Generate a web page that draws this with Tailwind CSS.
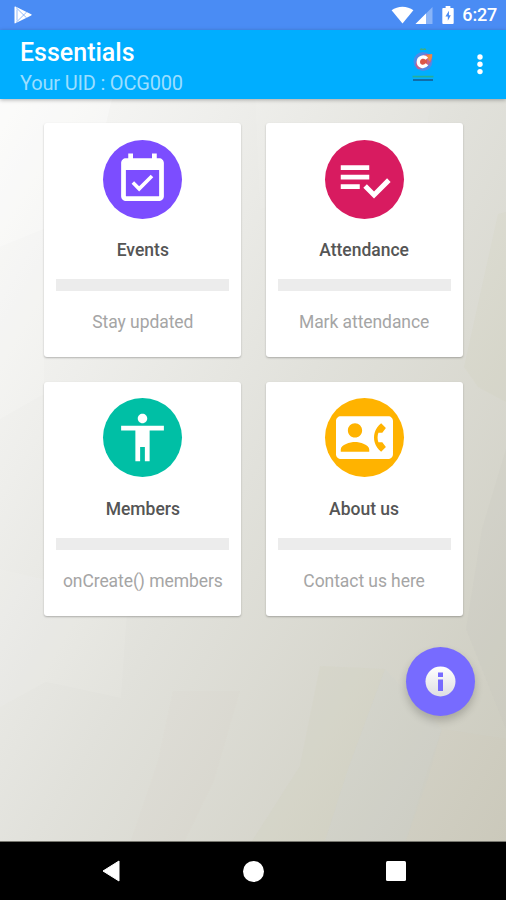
<!DOCTYPE html>
<html lang="en">
<head>
<meta charset="utf-8">
<title>Essentials</title>
<script src="https://cdn.jsdelivr.net/npm/@tailwindcss/browser@4"></script>
</head>
<body class="flex h-[900px] w-[506px] flex-col overflow-hidden bg-black font-['Roboto',sans-serif]">
  <!-- Status bar -->
  <header class="flex h-[30px] shrink-0 items-center justify-between bg-[#4a8cf4] pl-[14px] pr-[9px] text-white">
    <svg class="h-[18px] w-[18px]" viewBox="0 0 18 18"><path d="M.5 1.2Q.5.2 1.4.6L17.2 8.2q1 .6 0 1.2L1.4 17.3q-.9.4-.9-.6z" fill="#fff"/><path d="M2 1.5 12.7 12M2 16.5 12.7 6M3 3.5v11" stroke="#4a8cf4" stroke-width=".6" fill="none"/></svg>
    <div class="flex items-center">
      <svg class="h-[18px] w-[23px]" viewBox="0 0 23 18"><path d="M.6 4.2C6.8-.5 16.2-.5 22.4 4.2L11.5 17.5z" fill="#fff"/></svg>
      <svg class="ml-[1px] h-[17px] w-[18px]" viewBox="0 0 18 17"><path d="M17.5 0v17H.5z" fill="#fff" opacity=".35"/><path d="M11 6.500V17H.5z" fill="#fff"/></svg>
      <svg class="ml-[9px] h-[18px] w-[12px]" viewBox="0 0 12 19"><path d="M3.500 0h5v2H11q1 0 1 1v15q0 1-1 1H1q-1 0-1-1V3q0-1 1-1h2.500z" fill="#fff"/><path d="M7 5 3.300 11h2.500v4.500L9 9.800H7z" fill="#4a8cf4"/></svg>
      <span class="ml-[8px] text-[18px] leading-[32px] font-medium tracking-[-0.2px]">6:27</span>
    </div>
  </header>

  <!-- App bar -->
  <div class="relative z-10 flex h-[69px] shrink-0 items-start justify-between bg-[#00aeff] pl-5 pr-[23px] shadow-[0_1px_4px_rgba(0,0,0,0.3)]">
    <div class="pt-[9px]">
      <h1 class="text-[25px] leading-[28px] font-medium text-white">Essentials</h1>
      <p class="mt-[4px] text-[20px] leading-[24px] tracking-[-0.180px] text-[#9bdeff]">Your UID : OCG000</p>
    </div>
    <div class="flex items-center pt-[16px]">
      <svg class="h-[36px] w-[24px]" viewBox="0 0 24 36">
        <path d="M8.500 4 10 2l2 1L14 2l1.500 2z" fill="#3cae86"/>
        <circle cx="12" cy="15.500" r="9.500" fill="#4f8ae6"/>
        <path d="M4.500 19.500Q5 12 12 9q5-1.500 9.500-.500-.500 8-4.500 11-5 4-10 3.500z" fill="#c4638d"/>
        <path d="m15 9.500 6-1.500q.5 5-2.500 7.500z" fill="#ea8a45"/>
        <circle cx="12" cy="15.500" r="4" fill="#dd5648"/>
        <path d="M15.800 12.800C13 9.300 7.300 11.300 7.300 16c0 4.700 6 6 8.700 2.300" fill="none" stroke="#fff" stroke-width="3.300"/>
        <path d="M1.500 30.600h21" stroke="#26ae9a" stroke-width="1.700"/><path d="M2 34h20" stroke="#14609a" stroke-width="1.700"/>
      </svg>
      <svg class="ml-[42px] h-[22px] w-[6px]" viewBox="0 0 6 22" fill="#fff"><circle cx="3" cy="4" r="2.700"/><circle cx="3" cy="11.300" r="2.700"/><circle cx="3" cy="18.600" r="2.700"/></svg>
    </div>
  </div>

  <main class="relative flex-1 overflow-hidden border-b border-[#77776f]">
    <!-- Faceted backdrop -->
    <svg class="absolute inset-0 h-full w-full" viewBox="0 0 506 742" preserveAspectRatio="none">
      <defs><linearGradient id="bg" gradientUnits="userSpaceOnUse" x1="0" y1="0" x2="700" y2="415"><stop offset="0" stop-color="#fafaf9"/><stop offset=".25" stop-color="#eeeeeb"/><stop offset=".5" stop-color="#e1e1db"/><stop offset="1" stop-color="#cbcabd"/></linearGradient></defs>
      <path d="M0 0h506v742H0z" fill="url(#bg)"/>
      <g fill="#fff">
        <path d="M0 0h112L95 70 44 130 0 148z" opacity=".3"/>
        <path d="M0 148 44 130v165L0 320z" opacity=".15"/>
        <path d="M128 500l-7 99-75-16L0 608V470z" opacity=".08"/>
        <path d="M255 0h176l-10 70-161 40z" opacity=".06"/>
      </g>
      <g fill="#cfcdb0">
        <path d="M173 592h67l-26 90-30 62h-54l28-82z" opacity=".05"/>
        <path d="m320 567 65 3-37 100-23 72h-73l48-75z" opacity=".12"/>
        <path d="m442 630 64 10v102H406l22-72z" opacity=".07"/>
        <path d="m498 115 8-2v190l-28-15-14-20z" opacity=".12"/>
      </g>
      <path d="m385 570 57 60-14 50-22 62h-81l23-72z" fill="#c9cacb" opacity=".12"/>
      <path d="m482 430 24-80v280l-40-100z" fill="#c4c5ba" opacity=".15"/>
    </svg>

    <div class="relative grid grid-cols-[197px_197px] gap-x-[24.300px] gap-y-[24.500px] pl-[44.300px] pt-[24.200px]">
      <section class="flex h-[234px] flex-col items-center rounded-[3px] bg-white px-3 pt-[16.500px] shadow-[0_1px_2px_rgba(0,0,0,0.25)]">
        <div class="flex h-[79px] w-[79px] shrink-0 items-center justify-center rounded-full bg-[#7c4dff]">
          <svg class="h-[57px] w-[57px] fill-white" viewBox="0 0 24 24"><path d="M16.530 11.060 15.470 10l-4.880 4.880-2.120-2.120-1.060 1.060L10.590 17l5.940-5.940zM19 3h-1V1h-2v2H8V1H6v2H5c-1.110 0-1.990.9-1.990 2L3 19c0 1.100.890 2 2 2h14c1.100 0 2-.9 2-2V5c0-1.100-.9-2-2-2zm0 16H5V8h14v11z"/></svg>
        </div>
        <h2 class="mt-[19.500px] text-[17.500px] leading-[24px] font-medium text-[#555]">Events</h2>
        <div class="mt-[17px] h-[12px] w-full shrink-0 bg-[#ececec]"></div>
        <p class="mt-[19.300px] text-[17.500px] leading-[24px] tracking-[-0.070px] whitespace-nowrap text-[#a5a5a5]">Stay updated</p>
      </section>
      <section class="flex h-[234px] flex-col items-center rounded-[3px] bg-white px-3 pt-[16.500px] shadow-[0_1px_2px_rgba(0,0,0,0.25)]">
        <div class="flex h-[79px] w-[79px] shrink-0 items-center justify-center rounded-full bg-[#d81b60]">
          <svg class="h-[57px] w-[57px] fill-white" viewBox="0 0 24 24"><path d="M14 10H2v2h12v-2zm0-4H2v2h12V6zM2 16h8v-2H2v2zm19.500-4.500L23 13l-6.990 7-4.510-4.500L13 14l3.010 3 5.490-5.500z"/></svg>
        </div>
        <h2 class="mt-[19.500px] text-[17.500px] leading-[24px] font-medium text-[#555]">Attendance</h2>
        <div class="mt-[17px] h-[12px] w-full shrink-0 bg-[#ececec]"></div>
        <p class="mt-[19.300px] text-[17.500px] leading-[24px] tracking-[-0.070px] whitespace-nowrap text-[#a5a5a5]">Mark attendance</p>
      </section>
      <section class="flex h-[234px] flex-col items-center rounded-[3px] bg-white px-3 pt-[16.500px] shadow-[0_1px_2px_rgba(0,0,0,0.25)]">
        <div class="flex h-[79px] w-[79px] shrink-0 items-center justify-center rounded-full bg-[#00bfa5]">
          <svg class="h-[57px] w-[57px] fill-white" viewBox="0 0 24 24"><path d="M12 2c1.100 0 2 .9 2 2s-.9 2-2 2-2-.9-2-2 .9-2 2-2zm9 7h-6v13h-2v-6h-2v6H9V9H3V7h18v2z"/></svg>
        </div>
        <h2 class="mt-[19.500px] text-[17.500px] leading-[24px] font-medium text-[#555]">Members</h2>
        <div class="mt-[17px] h-[12px] w-full shrink-0 bg-[#ececec]"></div>
        <p class="mt-[19.300px] text-[17.500px] leading-[24px] tracking-[-0.070px] whitespace-nowrap text-[#a5a5a5]">onCreate() members</p>
      </section>
      <section class="flex h-[234px] flex-col items-center rounded-[3px] bg-white px-3 pt-[16.500px] shadow-[0_1px_2px_rgba(0,0,0,0.25)]">
        <div class="flex h-[79px] w-[79px] shrink-0 items-center justify-center rounded-full bg-[#ffb300]">
          <svg class="h-[57px] w-[57px] fill-white" viewBox="0 0 24 24"><path d="M22 3H2C.9 3 0 3.900 0 5v14c0 1.100.9 2 2 2h20c1.100 0 1.990-.9 1.990-2L24 5c0-1.100-.9-2-2-2zM8 6c1.660 0 3 1.340 3 3s-1.340 3-3 3-3-1.340-3-3 1.340-3 3-3zm6 12H2v-1c0-2 4-3.100 6-3.100s6 1.100 6 3.100v1zm3.850-4h1.640L21 16l-1.990 1.990c-1.310-.98-2.280-2.380-2.730-3.990-.18-.64-.28-1.310-.28-2s.1-1.360.28-2c.45-1.620 1.420-3.010 2.730-3.990L21 8l-1.510 2h-1.640c-.22.630-.35 1.300-.35 2s.13 1.370.35 2z"/></svg>
        </div>
        <h2 class="mt-[19.500px] text-[17.500px] leading-[24px] font-medium text-[#555]">About us</h2>
        <div class="mt-[17px] h-[12px] w-full shrink-0 bg-[#ececec]"></div>
        <p class="mt-[19.300px] text-[17.500px] leading-[24px] tracking-[-0.070px] whitespace-nowrap text-[#a5a5a5]">Contact us here</p>
      </section>
    </div>

    <!-- Floating action button -->
    <button aria-label="Info" class="absolute right-[31px] bottom-[125px] flex h-[69px] w-[69px] items-center justify-center rounded-full bg-[#776bff] shadow-[0_5px_8px_rgba(0,0,0,0.2)]">
      <svg class="h-[31px] w-[31px]" viewBox="0 0 31 31"><defs><linearGradient id="info" x1="0" y1="0" x2="0" y2="1"><stop stop-color="#fff"/><stop offset="1" stop-color="#dedee2"/></linearGradient></defs><circle cx="15.500" cy="15.500" r="15" fill="url(#info)"/><path d="M13 6.500h5v4.500h-5zM13 13.500h5V25h-5z" fill="#776bff"/></svg>
    </button>
  </main>

  <!-- Navigation bar -->
  <nav class="flex h-[58px] shrink-0 items-center justify-between bg-black pl-[102px] pr-[100px]">
    <svg class="h-[22px] w-[18px]" viewBox="0 0 18 22"><path d="M17 1v20L1 11z" fill="#fff" stroke="#fff" stroke-linejoin="round"/></svg>
    <div class="h-[21px] w-[21px] rounded-full bg-white"></div>
    <div class="h-[20px] w-[20px] rounded-[1.500px] bg-white"></div>
  </nav>
</body>
</html>
